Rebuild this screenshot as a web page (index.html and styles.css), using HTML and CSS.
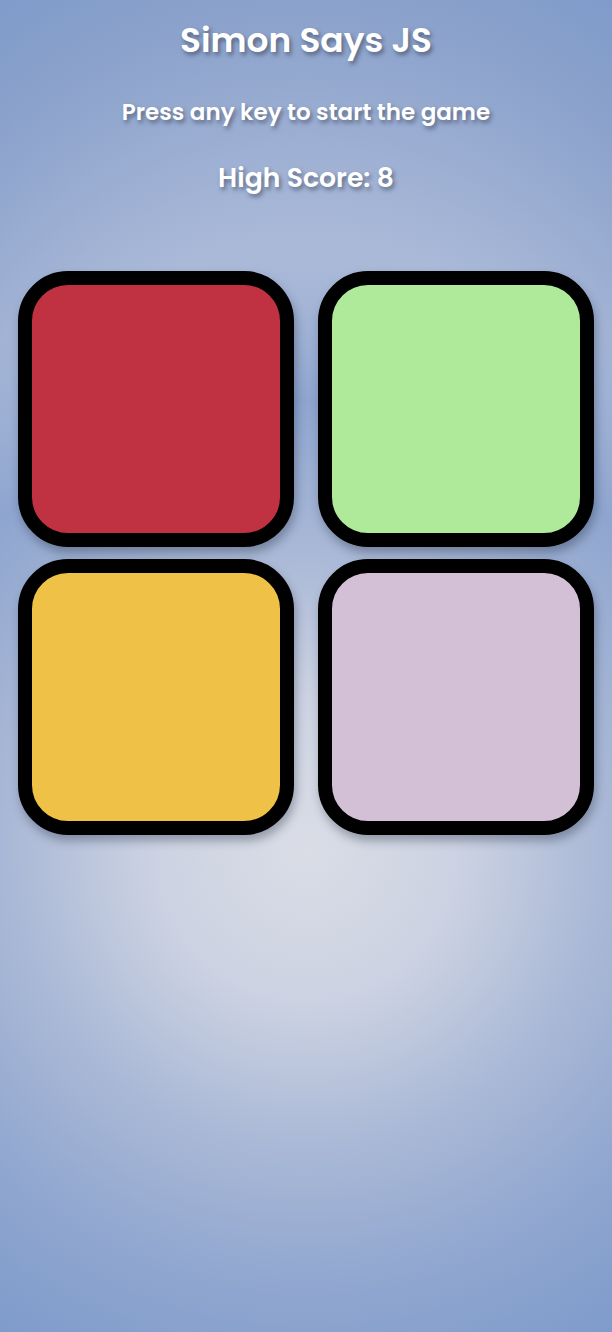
FILE: index.html
```html
<!DOCTYPE html>
<html lang="en">
<head>
<meta charset="utf-8">
<title>Simon Says JS</title>
<link rel="stylesheet" href="styles.css">
</head>
<body>
  <header class="head">
    <h1 class="title">Simon Says JS</h1>
    <h3 class="prompt">Press any key to start the game</h3>
    <h2 class="score">High Score: 8</h2>
  </header>
  <main class="board">
    <div class="btn red"></div>
    <div class="btn green"></div>
    <div class="btn yellow"></div>
    <div class="btn purple"></div>
  </main>
</body>
</html>
```

FILE: styles.css
```css
html {
  min-height: 100%;
  background-color: #7b99ca;
  background-image:
    radial-gradient(circle 600px at 50% 850px, #dadde6 0%, #ccd2e2 25%, #a9b8d6 50%, #8ea5cf 75%, rgba(123, 153, 202, 0) 100%),
    radial-gradient(ellipse 700px 1000px at 50% 100%, #dadde6 0%, #c6cddf 30%, #aab9d8 61%, #8aa1cb 85%, #7b99ca 100%);
  background-size: 100% 100%, 100% 850px;
  background-position: 0 0, 0 0;
  background-repeat: no-repeat, no-repeat;
}
body {
  margin: 0;
  min-height: 1332px;
  font-family: "Poppins", "Open Sans", "DejaVu Sans", sans-serif;
  color: #ffffff;
  text-align: center;
}
.head {
  display: flex;
  flex-direction: column;
  align-items: center;
  padding-top: 16px;
}
.title,
.prompt,
.score {
  margin: 0;
  font-weight: 600;
  text-shadow: 2px 3px 4px rgba(40, 50, 70, 0.55);
}
.title {
  font-size: 34.4px;
  line-height: 48px;
}
.prompt {
  margin-top: 32px;
  font-size: 23px;
  line-height: 32px;
}
.score {
  margin-top: 31px;
  font-size: 26.7px;
  line-height: 38px;
}
.board {
  display: grid;
  grid-template-columns: 276px 276px;
  column-gap: 24px;
  row-gap: 12px;
  justify-content: center;
  margin-top: 74px;
}
.btn {
  box-sizing: border-box;
  width: 276px;
  height: 276px;
  border: 14px solid #000;
  border-radius: 50px;
  box-shadow: 2px 6px 10px rgba(30, 40, 60, 0.35);
}
.red { background: #c03241; }
.green { background: #aeea99; }
.yellow { background: #efc146; }
.purple { background: #d3c0d7; }
```
